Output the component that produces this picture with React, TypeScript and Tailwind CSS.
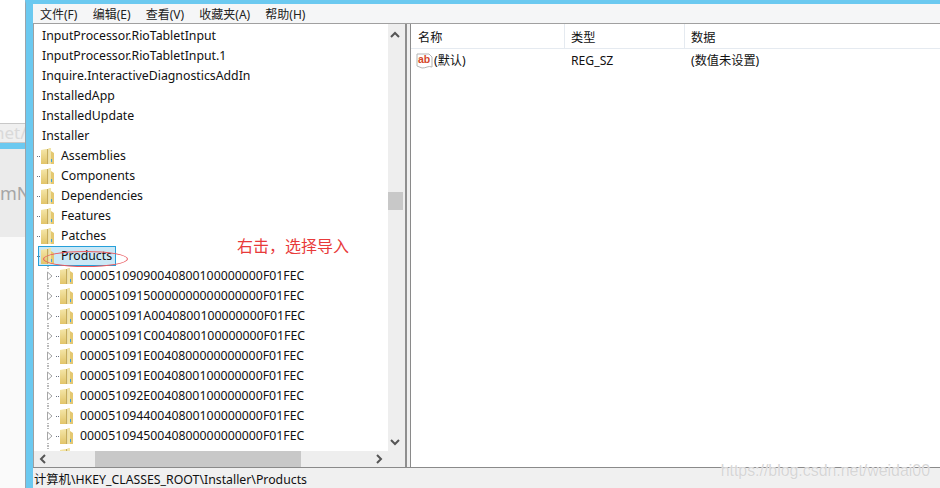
const tree1 = ["InputProcessor.RioTabletInput","InputProcessor.RioTabletInput.1","Inquire.InteractiveDiagnosticsAddIn","InstalledApp","InstalledUpdate","Installer"];
const tree2 = ["Assemblies","Components","Dependencies","Features","Patches"];
const tree3 = ["00005109090040800100000000F01FEC","00005109150000000000000000F01FEC","000051091A0040800100000000F01FEC","000051091C0040800100000000F01FEC","000051091E0040800000000000F01FEC","000051091E0040800100000000F01FEC","000051092E0040800100000000F01FEC","00005109440040800100000000F01FEC","00005109450040800000000000F01FEC",""];

function Folder() {
  return (
    <svg width="13" height="16" viewBox="0 0 13 16" className="shrink-0">
      <defs>
        <linearGradient id="fg" x1="0" y1="0" x2="0" y2="1">
          <stop offset="0" stopColor="#f4e6a8" />
          <stop offset="1" stopColor="#e2c468" />
        </linearGradient>
      </defs>
      <path d="M0 2 L5 1 L6 1 L6 16 L0 16 Z" fill="url(#fg)" />
      <path d="M6 1 L7.5 1 L7.5 16 L6 16 Z" fill="#c4ab5c" />
      <path d="M7.5 0 L10 0 L10 16 L7.5 16 Z" fill="#f2e4a6" />
      <path d="M10 3 L13 5 L13 16 L10 16 Z" fill="#e4c871" />
      <rect x="10" y="11" width="1" height="3" fill="#3f9fe0" />
    </svg>
  );
}

function Row({ label, level }: { label: string; level: 0 | 1 | 2 }) {
  return (
    <div className="h-5 flex items-center whitespace-nowrap relative">
      {level === 0 && <span className="pl-[8px]">{label}</span>}
      {level === 1 && (
        <>
          <span className="ml-[3px] mr-[1px] w-[3px] border-t border-dotted border-gray-500" />
          <Folder />
          <span className="ml-[7px]">{label}</span>
        </>
      )}
      {level === 2 && (
        <>
          <svg width="6" height="20" viewBox="0 0 6 20" className="ml-[13px] shrink-0">
            <path d="M0.5 6 L5 10 L0.5 14 Z" fill="#fff" stroke="#a6a6a6" />
            <path d="M1 0 V1 M1 2 V3 M1 17 V18 M1 19 V20" stroke="#777" />
          </svg>
          <span className="ml-[3px] mr-[1px] w-[3px] border-t border-dotted border-gray-500" />
          <Folder />
          <span className="ml-[7px]">{label}</span>
        </>
      )}
    </div>
  );
}

export default function App() {
  return (
    <div className="w-[940px] h-[488px] overflow-hidden flex bg-white text-[12.3px] leading-5 text-[#111]" style={{ fontFamily: '"Noto Sans", "Noto Sans CJK SC", sans-serif' }}>
      <div className="w-[25px] shrink-0 flex flex-col">
        <div className="h-[123px] bg-white" />
        <div className="h-[20px] bg-[#f0f0f0] border-y border-[#c8c8c8] overflow-hidden text-[#d9d9d9] text-[17px] leading-[18px] whitespace-nowrap"><span className="block -ml-[6px]">net/W</span></div>
        <div className="h-[6px] bg-[#6bc9f0]" />
        <div className="h-[88px] bg-[#ebebeb] overflow-hidden text-[#a6a6a6] text-[18px] leading-[88px] whitespace-nowrap">mN</div>
        <div className="flex-1 bg-[#fafafa]" />
      </div>
      <div className="flex-1 min-w-0 flex flex-col border-l border-[#9aa5ad] border-t-[4px] border-t-[#6bc9f0] relative">
        <div className="flex-1 min-h-0 flex border-l-[7px] border-l-[#6bc9f0]">
          <div className="flex-1 min-w-0 flex flex-col">
            <div className="h-5 shrink-0 flex items-center gap-[15.2px] pl-[7px] pt-[2px] bg-[#f5f6f7] border-b border-[#a0a0a0] text-[12px] text-[#222]">
              <span>文件(F)</span>
              <span>编辑(E)</span>
              <span>查看(V)</span>
              <span>收藏夹(A)</span>
              <span>帮助(H)</span>
            </div>
            <div className="flex-1 min-h-0 flex">
              <div className="w-[372px] shrink-0 flex flex-col border-l border-[#a0a0a0]">
                <div className="flex-1 min-h-0 flex">
                  <div className="flex-1 min-w-0 overflow-hidden pt-[2px]">
                    {tree1.map((t) => <Row key={t} label={t} level={0} />)}
                    {tree2.map((t) => <Row key={t} label={t} level={1} />)}
                    <div className="relative">
                      <div className="absolute left-[4px] top-0 w-[78px] h-[20px] border border-[#26a0da] bg-[#cbe8f6]" />
                      <Row label="Products" level={1} />
                      <div className="absolute left-[9px] top-[5px] w-[85px] h-[16px] rounded-[50%] border border-[#e9595f]" />
                    </div>
                    {tree3.map((t, i) => <Row key={i} label={t} level={2} />)}
                  </div>
                  <div className="w-[17px] shrink-0 bg-[#eeeeee] flex flex-col items-start pt-[7px] pb-[5px]">
                    <svg width="10" height="8" viewBox="0 0 10 8" className="ml-[2px]"><path d="M1 6 L5 2 L9 6" fill="none" stroke="#555" strokeWidth="2" /></svg>
                    <div className="w-[15px] h-[18px] bg-[#c8c8c8] mt-[153px]" />
                    <div className="flex-1" />
                    <svg width="10" height="8" viewBox="0 0 10 8" className="ml-[2px]"><path d="M1 2 L5 6 L9 2" fill="none" stroke="#555" strokeWidth="2" /></svg>
                  </div>
                </div>
                <div className="h-[16px] shrink-0 bg-[#eeeeee] flex items-center pl-[5px] pr-[22px]">
                  <svg width="8" height="10" viewBox="0 0 8 10"><path d="M6 1 L2 5 L6 9" fill="none" stroke="#555" strokeWidth="2" /></svg>
                  <div className="ml-[48px] w-[206px] h-full bg-[#c8c8c8]" />
                  <div className="flex-1" />
                  <svg width="8" height="10" viewBox="0 0 8 10"><path d="M2 1 L6 5 L2 9" fill="none" stroke="#555" strokeWidth="2" /></svg>
                </div>
              </div>
              <div className="w-[5px] shrink-0 bg-[#f0f0f0] border-l-2 border-[#8f8f8f]" />
              <div className="flex-1 min-w-0 border-l border-[#8a8a8a] bg-white text-[12.2px]">
                <div className="h-[25px] flex items-center border-b border-[#e5eaf0]">
                  <div className="w-[154px] pl-[7px] pt-[3px] border-r border-[#e5eaf0] h-full flex items-center">名称</div>
                  <div className="w-[120px] pl-[6px] pt-[3px] border-r border-[#e5eaf0] h-full flex items-center">类型</div>
                  <div className="pl-[6px] pt-[3px] h-full flex items-center">数据</div>
                </div>
                <div className="flex items-center h-[20px] mt-[2px]">
                  <div className="w-[154px] pl-[5px] flex items-center">
                    <svg width="17" height="16" viewBox="0 0 17 16" className="shrink-0">
                      <path d="M1 1 H13 L16 4 V14 Q13 13 11 14 T6 15 L1 13 Z" fill="#fff" stroke="#b5b5b5" />
                      <text x="2" y="10" fontSize="10.5" fontWeight="700" fill="#d4472a" fontFamily="Liberation Sans">ab</text>
                    </svg>
                    <span className="ml-[1px]">(默认)</span>
                  </div>
                  <div className="w-[120px] pl-[6px]">REG_SZ</div>
                  <div className="pl-[6px]">(数值未设置)</div>
                </div>
              </div>
            </div>
            <div className="h-[21px] shrink-0 bg-[#f0f0f0] border-t border-[#8a8a8a] pl-[1px] pt-[3px] flex items-center whitespace-nowrap">
              计算机\HKEY_CLASSES_ROOT\Installer\Products
            </div>
          </div>
        </div>
        <div className="absolute left-[211px] top-[232px] text-[16px] text-[#e83a3a]">右击，选择导入</div>
        <div className="absolute right-[10px] bottom-[7px] text-[15.9px] text-[#d6d6d6] [text-shadow:0_0_1px_#fff]" style={{ fontFamily: '"Liberation Sans", sans-serif' }}>https://blog.csdn.net/weidai00</div>
      </div>
    </div>
  );
}
